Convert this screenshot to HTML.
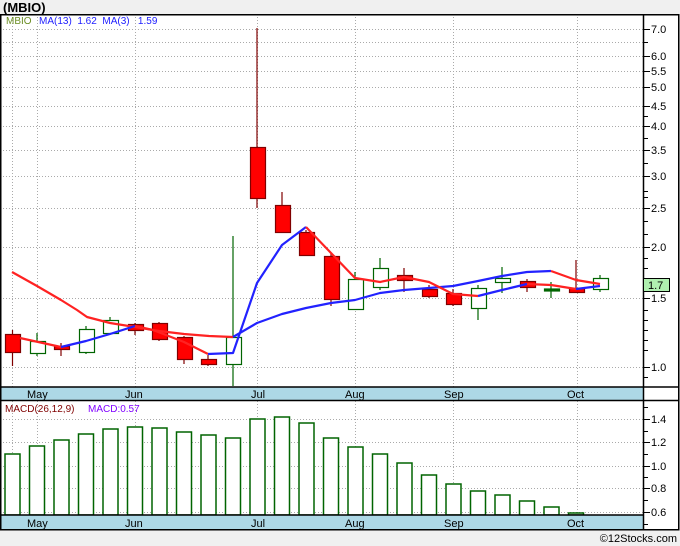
<!DOCTYPE html>
<html><head><meta charset="utf-8"><style>
html,body{margin:0;padding:0;background:#f0f0f0;}
svg{display:block;font-family:"Liberation Sans",sans-serif;}
</style></head><body>
<svg width="680" height="546" viewBox="0 0 680 546" xmlns="http://www.w3.org/2000/svg">
<rect x="0" y="0" width="680" height="546" fill="#f0f0f0"/>
<text x="3" y="12" font-size="13" font-weight="bold" fill="#000">(MBIO)</text>
<rect x="0" y="14" width="679" height="516" fill="#fff"/>
<g stroke="#aaa" stroke-dasharray="1,2" stroke-width="1">
<line x1="0" x2="643" y1="29.5" y2="29.5"/><line x1="0" x2="643" y1="42.5" y2="42.5"/>
<line x1="0" x2="643" y1="56.5" y2="56.5"/><line x1="0" x2="643" y1="71.5" y2="71.5"/>
<line x1="0" x2="643" y1="87.5" y2="87.5"/><line x1="0" x2="643" y1="106.5" y2="106.5"/>
<line x1="0" x2="643" y1="126.5" y2="126.5"/><line x1="0" x2="643" y1="150.5" y2="150.5"/>
<line x1="0" x2="643" y1="176.5" y2="176.5"/><line x1="0" x2="643" y1="208.5" y2="208.5"/>
<line x1="0" x2="643" y1="247.5" y2="247.5"/><line x1="0" x2="643" y1="298.5" y2="298.5"/>
<line x1="0" x2="643" y1="367.5" y2="367.5"/>
<line x1="0" x2="643" y1="419.5" y2="419.5"/><line x1="0" x2="643" y1="442.5" y2="442.5"/>
<line x1="0" x2="643" y1="466.5" y2="466.5"/><line x1="0" x2="643" y1="488.5" y2="488.5"/>
<line x1="0" x2="643" y1="512.5" y2="512.5"/>
<g>
<line x1="12.5" x2="12.5" y1="14" y2="530"/><line x1="37.5" x2="37.5" y1="14" y2="530"/>
<line x1="135.5" x2="135.5" y1="14" y2="530"/><line x1="257.5" x2="257.5" y1="14" y2="530"/>
<line x1="355.5" x2="355.5" y1="14" y2="530"/><line x1="453.5" x2="453.5" y1="14" y2="530"/>
<line x1="577.5" x2="577.5" y1="14" y2="530"/>
</g></g>
<text x="6" y="24" font-size="10" fill="#6b8e23">MBIO</text>
<text x="39" y="24" font-size="10" fill="#2020ff">MA(13)&#160;&#160;1.62&#160;&#160;MA(3)&#160;&#160;&#160;1.59</text>
<!-- wicks -->
<g stroke-width="1.2">
<line x1="12.5" x2="12.5" y1="330" y2="366" stroke="#800000"/>
<line x1="37" x2="37" y1="333" y2="356" stroke="#006400"/>
<line x1="61" x2="61" y1="343" y2="356" stroke="#800000"/>
<line x1="86" x2="86" y1="326" y2="354" stroke="#006400"/>
<line x1="110" x2="110" y1="317" y2="334" stroke="#006400"/>
<line x1="135" x2="135" y1="323" y2="335" stroke="#800000"/>
<line x1="159" x2="159" y1="322" y2="341" stroke="#800000"/>
<line x1="184" x2="184" y1="336" y2="364" stroke="#800000"/>
<line x1="208" x2="208" y1="355" y2="366" stroke="#800000"/>
<line x1="233" x2="233" y1="236" y2="386" stroke="#006400"/>
<line x1="257" x2="257" y1="28" y2="208" stroke="#800000"/>
<line x1="282" x2="282" y1="192" y2="232" stroke="#800000"/>
<line x1="306" x2="306" y1="230" y2="256" stroke="#800000"/>
<line x1="331" x2="331" y1="253" y2="306" stroke="#800000"/>
<line x1="355" x2="355" y1="272" y2="310" stroke="#006400"/>
<line x1="380" x2="380" y1="258" y2="290" stroke="#006400"/>
<line x1="404" x2="404" y1="268" y2="292" stroke="#800000"/>
<line x1="429" x2="429" y1="285" y2="298" stroke="#800000"/>
<line x1="453" x2="453" y1="289" y2="306" stroke="#800000"/>
<line x1="478" x2="478" y1="285" y2="320" stroke="#006400"/>
<line x1="502" x2="502" y1="267" y2="293" stroke="#006400"/>
<line x1="527" x2="527" y1="279" y2="292" stroke="#800000"/>
<line x1="551" x2="551" y1="282" y2="298" stroke="#006400"/>
<line x1="576" x2="576" y1="260" y2="293" stroke="#800000"/>
<line x1="600" x2="600" y1="275" y2="292" stroke="#006400"/>
</g>
<!-- bodies -->
<g stroke-width="1.2">
<rect x="5.5" y="334.5" width="15" height="18" fill="#f00" stroke="#800000"/>
<rect x="30.5" y="341.5" width="15" height="12" fill="#fff" stroke="#006400"/>
<rect x="54.5" y="346.5" width="15" height="3" fill="#f00" stroke="#800000"/>
<rect x="79.5" y="329.5" width="15" height="23" fill="#fff" stroke="#006400"/>
<rect x="103.5" y="320.5" width="15" height="13" fill="#fff" stroke="#006400"/>
<rect x="128.5" y="324.5" width="15" height="6" fill="#f00" stroke="#800000"/>
<rect x="152.5" y="323.5" width="15" height="16" fill="#f00" stroke="#800000"/>
<rect x="177.5" y="337.5" width="15" height="22" fill="#f00" stroke="#800000"/>
<rect x="201.5" y="359.5" width="15" height="5" fill="#f00" stroke="#800000"/>
<rect x="226.5" y="337.5" width="15" height="27" fill="#fff" stroke="#006400"/>
<rect x="250.5" y="147.5" width="15" height="51" fill="#f00" stroke="#800000"/>
<rect x="275.5" y="205.5" width="15" height="27" fill="#f00" stroke="#800000"/>
<rect x="299.5" y="232.5" width="15" height="23" fill="#f00" stroke="#800000"/>
<rect x="324.5" y="256.5" width="15" height="43" fill="#f00" stroke="#800000"/>
<rect x="348.5" y="279.5" width="15" height="30" fill="#fff" stroke="#006400"/>
<rect x="373.5" y="268.5" width="15" height="19" fill="#fff" stroke="#006400"/>
<rect x="397.5" y="275.5" width="15" height="5" fill="#f00" stroke="#800000"/>
<rect x="422.5" y="289.5" width="15" height="7" fill="#f00" stroke="#800000"/>
<rect x="446.5" y="293.5" width="15" height="11" fill="#f00" stroke="#800000"/>
<rect x="471.5" y="288.5" width="15" height="20" fill="#fff" stroke="#006400"/>
<rect x="495.5" y="278.5" width="15" height="4" fill="#fff" stroke="#006400"/>
<rect x="520.5" y="281.5" width="15" height="6" fill="#f00" stroke="#800000"/>
<rect x="544.5" y="289" width="15" height="2" fill="#006400" stroke="#006400"/>
<rect x="569.5" y="288.5" width="15" height="4" fill="#f00" stroke="#800000"/>
<rect x="593.5" y="278.5" width="15" height="11" fill="#fff" stroke="#006400"/>
</g>
<!-- MA lines -->
<g fill="none" stroke-width="2.2" stroke-linejoin="round">
<polyline stroke="#f22" points="12,272 37,286 61,300 77,310 87,317 110,323 135,327 159,331 184,334 209,336 233,337"/>
<polyline stroke="#22f" points="233,337 257,323 282,314 306,308 331,303 355,300 380,293 404,290 429,288 453,286 478,281 502,276 527,272 551,271"/>
<polyline stroke="#f22" points="551,271 576,280 600,284"/>
<polyline stroke="#f22" points="20,338 61,347"/>
<polyline stroke="#22f" points="61,347 86,341 110,334 135,326"/>
<polyline stroke="#f22" points="135,326 153,330 184,342 208,354"/>
<polyline stroke="#22f" points="208,354 233,353 257,283 282,245 306,227"/>
<polyline stroke="#f22" points="306,227 331,253 355,278 380,282 404,277 429,282 453,294 478,296"/>
<polyline stroke="#22f" points="478,296 502,290 527,284"/>
<polyline stroke="#f22" points="527,284 551,285 576,289"/>
<polyline stroke="#22f" points="576,289 600,286"/>
</g>
<!-- MACD bars -->
<g fill="#fff" stroke="#006400" stroke-width="1.5">
<rect x="5" y="454" width="15" height="61"/><rect x="29.5" y="446" width="15" height="69"/>
<rect x="54" y="440" width="15" height="75"/><rect x="78.5" y="434" width="15" height="81"/>
<rect x="103" y="429" width="15" height="86"/><rect x="127.5" y="427" width="15" height="88"/>
<rect x="152" y="428" width="15" height="87"/><rect x="176.5" y="432" width="15" height="83"/>
<rect x="201" y="435" width="15" height="80"/><rect x="225.5" y="438" width="15" height="77"/>
<rect x="250" y="419" width="15" height="96"/><rect x="274.5" y="417" width="15" height="98"/>
<rect x="299" y="423" width="15" height="92"/><rect x="323.5" y="438" width="15" height="77"/>
<rect x="348" y="447" width="15" height="68"/><rect x="372.5" y="454" width="15" height="61"/>
<rect x="397" y="463" width="15" height="52"/><rect x="421.5" y="475" width="15" height="40"/>
<rect x="446" y="484" width="15" height="31"/><rect x="470.5" y="491" width="15" height="24"/>
<rect x="495" y="495" width="15" height="20"/><rect x="519.5" y="501" width="15" height="14"/>
<rect x="544" y="507" width="15" height="8"/><rect x="568.5" y="513" width="15" height="2"/>
</g>
<text x="5" y="412" font-size="10" fill="#800000">MACD(26,12,9)</text>
<text x="88" y="412" font-size="10" fill="#8000ff">MACD:0.57</text>
<!-- x bands -->
<rect x="0" y="387" width="643" height="13" fill="#add8e6"/>
<rect x="0" y="515" width="643" height="14" fill="#add8e6"/>
<g font-size="11" fill="#000">
<text x="27" y="398">May</text><text x="125" y="398">Jun</text><text x="251" y="398">Jul</text><text x="345" y="398">Aug</text><text x="444" y="398">Sep</text><text x="567" y="398">Oct</text>
<text x="27" y="527">May</text><text x="125" y="527">Jun</text><text x="251" y="527">Jul</text><text x="345" y="527">Aug</text><text x="444" y="527">Sep</text><text x="567" y="527">Oct</text>
</g>
<!-- frame -->
<g stroke="#000" stroke-width="1.5" fill="none">
<rect x="0.75" y="14.75" width="678" height="515"/>
<line x1="643.5" x2="643.5" y1="14" y2="530"/>
<line x1="0" x2="679" y1="387" y2="387"/>
<line x1="0" x2="679" y1="400.5" y2="400.5"/>
<line x1="0" x2="643" y1="515" y2="515"/>
</g>
<!-- right ticks -->
<g stroke="#000" stroke-width="1">
<line x1="643" x2="650" y1="29.5" y2="29.5"/><line x1="643" x2="648" y1="42.5" y2="42.5"/>
<line x1="643" x2="650" y1="56.5" y2="56.5"/><line x1="643" x2="650" y1="71.5" y2="71.5"/>
<line x1="643" x2="650" y1="87.5" y2="87.5"/><line x1="643" x2="650" y1="106.5" y2="106.5"/>
<line x1="643" x2="648" y1="116.5" y2="116.5"/><line x1="643" x2="650" y1="126.5" y2="126.5"/>
<line x1="643" x2="648" y1="138.5" y2="138.5"/><line x1="643" x2="650" y1="150.5" y2="150.5"/>
<line x1="643" x2="648" y1="163.5" y2="163.5"/><line x1="643" x2="650" y1="176.5" y2="176.5"/>
<line x1="643" x2="648" y1="191.5" y2="191.5"/><line x1="643" x2="648" y1="197.5" y2="197.5"/>
<line x1="643" x2="650" y1="208.5" y2="208.5"/><line x1="643" x2="648" y1="221.5" y2="221.5"/>
<line x1="643" x2="648" y1="234.5" y2="234.5"/><line x1="643" x2="650" y1="247.5" y2="247.5"/>
<line x1="643" x2="648" y1="258.5" y2="258.5"/><line x1="643" x2="648" y1="268.5" y2="268.5"/>
<line x1="643" x2="648" y1="278.5" y2="278.5"/><line x1="643" x2="650" y1="298.5" y2="298.5"/>
<line x1="643" x2="648" y1="310.5" y2="310.5"/><line x1="643" x2="648" y1="320.5" y2="320.5"/>
<line x1="643" x2="648" y1="330.5" y2="330.5"/><line x1="643" x2="648" y1="340.5" y2="340.5"/>
<line x1="643" x2="648" y1="350.5" y2="350.5"/><line x1="643" x2="650" y1="367.5" y2="367.5"/>
<line x1="643" x2="648" y1="377.5" y2="377.5"/>
<line x1="643" x2="648" y1="407.5" y2="407.5"/><line x1="643" x2="650" y1="419.5" y2="419.5"/>
<line x1="643" x2="648" y1="431.5" y2="431.5"/><line x1="643" x2="650" y1="442.5" y2="442.5"/>
<line x1="643" x2="648" y1="454.5" y2="454.5"/><line x1="643" x2="650" y1="466.5" y2="466.5"/>
<line x1="643" x2="648" y1="477.5" y2="477.5"/><line x1="643" x2="650" y1="488.5" y2="488.5"/>
<line x1="643" x2="648" y1="500.5" y2="500.5"/><line x1="643" x2="650" y1="512.5" y2="512.5"/>
<line x1="643" x2="648" y1="524.5" y2="524.5"/>
</g>
<g font-size="11" fill="#000">
<text x="651" y="33">7.0</text><text x="651" y="60">6.0</text><text x="651" y="75">5.5</text>
<text x="651" y="91">5.0</text><text x="651" y="110">4.5</text><text x="651" y="130">4.0</text>
<text x="651" y="154">3.5</text><text x="651" y="180">3.0</text><text x="651" y="212">2.5</text>
<text x="651" y="251">2.0</text><text x="651" y="302">1.5</text><text x="651" y="371">1.0</text>
<text x="651" y="423">1.4</text><text x="651" y="446">1.2</text><text x="651" y="470">1.0</text>
<text x="651" y="492">0.8</text><text x="651" y="516">0.6</text>
</g>
<rect x="643.5" y="278.5" width="26" height="13" fill="#b0f0b0" stroke="#000"/>
<text x="648" y="289" font-size="11" fill="#000">1.7</text>
<text x="677" y="542" font-size="11" fill="#000" text-anchor="end">©12Stocks.com</text>
</svg>
</body></html>
